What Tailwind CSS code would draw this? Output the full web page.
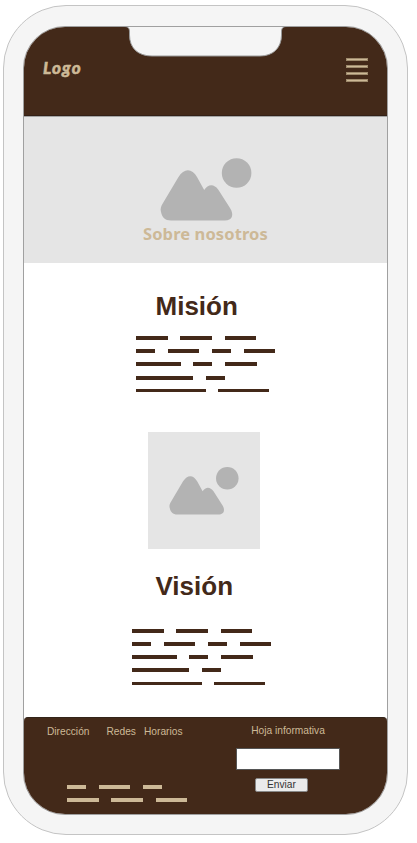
<!DOCTYPE html>
<html lang="es">
<head>
<meta charset="utf-8">
<title>Sobre nosotros</title>
<script src="https://cdn.jsdelivr.net/npm/@tailwindcss/browser@4"></script>
</head>
<body class="bg-white w-[417px] h-[843px] overflow-hidden pl-[3px] pt-[5px] font-['Liberation_Sans',sans-serif]">
<div class="w-[405px] h-[830px] rounded-[63px] border border-[#c4c4c4] bg-[#f5f5f5] pl-[19px] pt-[20px]">
  <div class="relative w-[365px] h-[789px] rounded-[42px] border border-[#a0a0a0] bg-white overflow-hidden flex flex-col">
    <header class="h-[89px] shrink-0 bg-[#432919] border-b border-[#332016] flex justify-between items-start pl-[19px] pr-[19px]">
      <div class="mt-[30px] font-['Lato',sans-serif] font-black italic text-[17px] leading-[22px] tracking-[1.200px] text-[#cdb997] [-webkit-text-stroke:0.5px_#cdb997]">Logo</div>
      <div class="mt-[31px] flex flex-col gap-[4.1px] w-[22px]">
        <i class="h-[3px] bg-[#cdb997] border border-[#9e8a6c]"></i>
        <i class="h-[3px] bg-[#cdb997] border border-[#9e8a6c]"></i>
        <i class="h-[3px] bg-[#cdb997] border border-[#9e8a6c]"></i>
        <i class="h-[3px] bg-[#cdb997] border border-[#9e8a6c]"></i>
      </div>
    </header>
    <section class="h-[147px] shrink-0 bg-[#e5e5e5] border-t border-[#a5a5a5] flex flex-col pt-[40px]">
      <svg class="ml-[135.500px] w-[92px] h-[64px] shrink-0" viewBox="0 0 92 64" fill="#b3b3b3"><path d="M1 55 C0 52 1 49 3 46 L18.500 20 C24 11 32 11 37 20 L44.200 33 C48 27 54 26.500 58.500 33 L70 51 C74.500 58 72 63.500 65 63.500 H11 C5 63.500 2 60 1 55Z"/><circle cx="76.600" cy="16" r="14.800"/></svg>
      <h1 class="ml-[119px] mt-px font-['Noto_Sans',sans-serif] font-bold text-[16.500px] leading-[24px] text-[#cdb997] whitespace-nowrap tracking-[0.1px]">Sobre nosotros</h1>
    </section>
    <main class="h-[454px] shrink-0 flex flex-col items-start text-[#432919]">
      <h2 class="ml-[131.500px] mt-[28px] text-[26px] leading-[30px] font-bold">Misión</h2>
      <div class="ml-[112px] mt-[15px] flex flex-col gap-[9.200px]">
        <div class="flex gap-[12.700px] *:h-[4px] *:bg-[#432919]"><i class="w-[31.700px]"></i><i class="w-[31.700px]"></i><i class="w-[31.700px]"></i></div>
        <div class="flex gap-[12.700px] *:h-[4px] *:bg-[#432919]"><i class="w-[19px]"></i><i class="w-[31.700px]"></i><i class="w-[19px]"></i><i class="w-[31.700px]"></i></div>
        <div class="flex gap-[12.700px] *:h-[4px] *:bg-[#432919]"><i class="w-[44.500px]"></i><i class="w-[19px]"></i><i class="w-[31.700px]"></i></div>
        <div class="flex gap-[12.700px] *:h-[4px] *:bg-[#432919]"><i class="w-[57px]"></i><i class="w-[19px]"></i></div>
        <div class="flex gap-[12.700px] *:h-[3px] *:bg-[#432919]"><i class="w-[69.800px]"></i><i class="w-[50.800px]"></i></div>
      </div>
      <div class="ml-[124px] mt-[40px] w-[112px] h-[117px] bg-[#e5e5e5] pl-[21px] pt-[34px]">
        <svg class="w-[70px] h-[49px]" viewBox="0 0 92 64" preserveAspectRatio="none" fill="#b3b3b3"><path d="M1 55 C0 52 1 49 3 46 L18.500 20 C24 11 32 11 37 20 L44.200 33 C48 27 54 26.500 58.500 33 L70 51 C74.500 58 72 63.500 65 63.500 H11 C5 63.500 2 60 1 55Z"/><circle cx="76.600" cy="16" r="14.800"/></svg>
      </div>
      <h2 class="ml-[131.500px] mt-[22px] text-[26px] leading-[30px] font-bold">Visión</h2>
      <div class="ml-[108px] mt-[28px] flex flex-col gap-[9.200px]">
        <div class="flex gap-[12.700px] *:h-[4px] *:bg-[#432919]"><i class="w-[31.700px]"></i><i class="w-[31.700px]"></i><i class="w-[31.700px]"></i></div>
        <div class="flex gap-[12.700px] *:h-[4px] *:bg-[#432919]"><i class="w-[19px]"></i><i class="w-[31.700px]"></i><i class="w-[19px]"></i><i class="w-[31.700px]"></i></div>
        <div class="flex gap-[12.700px] *:h-[4px] *:bg-[#432919]"><i class="w-[44.500px]"></i><i class="w-[19px]"></i><i class="w-[31.700px]"></i></div>
        <div class="flex gap-[12.700px] *:h-[4px] *:bg-[#432919]"><i class="w-[57px]"></i><i class="w-[19px]"></i></div>
        <div class="flex gap-[12.700px] *:h-[3px] *:bg-[#432919]"><i class="w-[69.800px]"></i><i class="w-[50.800px]"></i></div>
      </div>
    </main>
    <footer class="grow bg-[#432919] rounded-t-[4px] border-t border-[#33241a] flex text-[10.200px] leading-[12px] text-[#cdb997]">
      <div class="w-[212px] pt-[8px] pl-[23px]">
        <nav class="flex whitespace-nowrap"><span class="w-[59.500px]">Dirección</span><span class="w-[37.500px]">Redes</span><span>Horarios</span></nav>
        <div class="ml-[20px] mt-[47px] flex flex-col gap-[9px]">
          <div class="flex gap-[12.700px] *:h-[4px] *:bg-[#cdb997]"><i class="w-[19px]"></i><i class="w-[31.700px]"></i><i class="w-[19px]"></i></div>
          <div class="flex gap-[12.700px] *:h-[4px] *:bg-[#cdb997]"><i class="w-[31.700px]"></i><i class="w-[31.700px]"></i><i class="w-[31.700px]"></i></div>
        </div>
      </div>
      <form class="w-[104px] pt-[7px] flex flex-col items-center">
        <label for="mail" class="whitespace-nowrap">Hoja informativa</label>
        <input id="mail" class="mt-[11px] w-[104px] h-[22px] bg-white border border-[#555]">
        <button type="button" class="mt-[8px] mr-[13px] w-[53px] h-[14px] rounded-[2px] border border-[#888] bg-[#ebebeb] text-[#333] leading-[12px]">Enviar</button>
      </form>
    </footer>
    <svg class="absolute left-[100px] -top-px w-[163px] h-[32px]" viewBox="0 0 163 32"><path d="M0 0 V0.500 C4 0.500 5.500 2 5.500 6 V9 C5.500 22 14 30 28 30 H136 C149 30 157.500 22 157.500 9 V6 C157.500 2 159 0.500 163 0.500 V0Z" fill="#f5f5f5" stroke="#999" stroke-width="1"/></svg>
  </div>
</div>
</body>
</html>
